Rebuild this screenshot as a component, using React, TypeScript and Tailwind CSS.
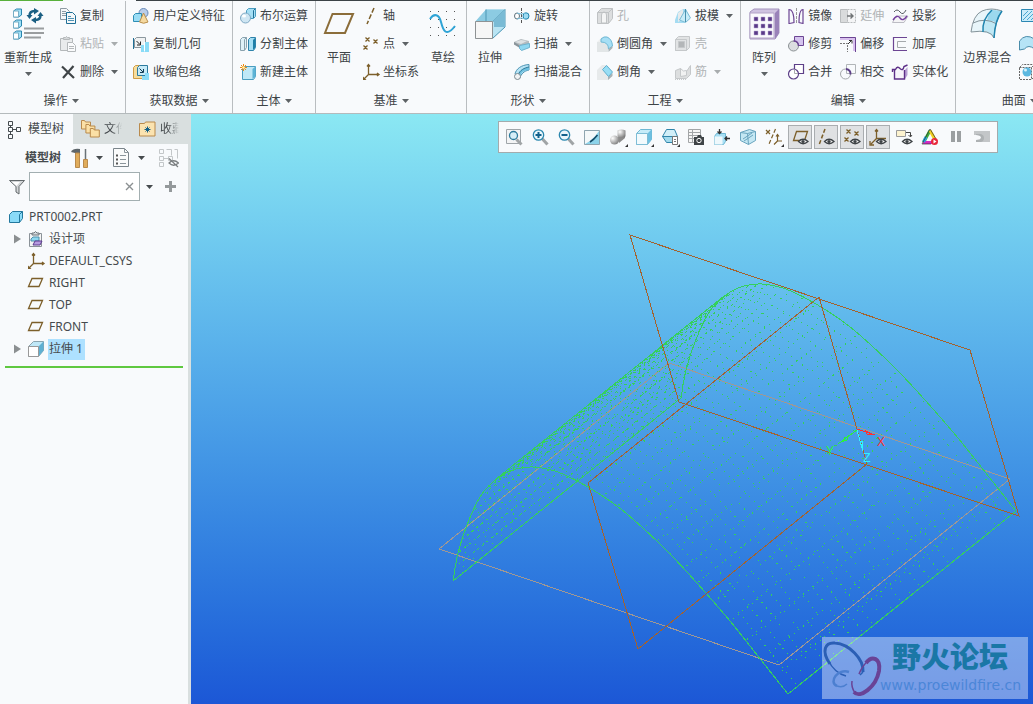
import { useState, type ReactNode } from "react";
import clsx from "clsx";

const icons: Record<string, ReactNode> = {
  copy: (
    <g stroke="#8d9aa3" fill="#f6f8f9">
      <path d="M.5.5h6l3 3v8h-9z" />
      <path d="M2 3.5h4M2 5.5h5M2 7.5h5" />
      <path d="M6.500 4.500h6l3 3v8h-9z" stroke="#1f6f96" />
      <path d="M8 8.500h3M8 10.500h6M8 12.500h6" stroke="#4f93b5" />
    </g>
  ),
  paste: (
    <g stroke="#b4b8ba" fill="#e9ebec">
      <path d="M.5 2.500h12v12H.500z" />
      <path d="M3.500 3.500v-2h2q1-2 2 0h2v2z" fill="#d4d7d9" />
      <path d="M7.500 6.500h5l3 3v6h-8z" fill="#fafbfc" />
      <path d="M9 10.500h5M9 12.500h5" />
    </g>
  ),
  remove: <path d="M2 2.500l12 11.500M13.500 2L3 14" stroke="#3f4447" strokeWidth="2.200" fill="none" />,
  udf: (
    <>
      <circle cx="10.500" cy="5" r="4.500" fill="#b9cde9" stroke="#6689b8" />
      <path d="M.500 7.500l2-2h6v6l-2 2h-6z" fill="#9adcf5" stroke="#2d8eb5" />
      <path d="M10.500 5L6.500 14q4 2.500 8.500 0z" fill="#f5d9a0" stroke="#b98f4c" />
    </>
  ),
  copyGeom: (
    <>
      <path d="M1.500 3.500l2-2h9v8l-2 2h-9z" fill="#f0f2f3" stroke="#8b979e" />
      <path d="M3.500 5l3.500 3.500M7.500 5.500v3.500H4" stroke="#222" fill="none" />
      <path d="M.500 2v11" stroke="#1f6f96" />
      <path d="M8 9h3V6h5v10H8z" fill="#8adcf7" />
      <path d="M11.500 6v9.500" stroke="#fff" />
    </>
  ),
  shrink: (
    <>
      <path d="M.500 3.500l2-2h9v11l-2 2h-9z" fill="#f7dd9d" stroke="#cf9c45" />
      <path d="M4.500 3.500l2-2h8v8l-2 2h-8z" fill="#c7ebf8" stroke="#2d7b9e" />
      <path d="M6.500 4.500L10 8M10.500 5v3.500H7" stroke="#113a52" fill="none" />
      <path d="M9 12h3V9h4v7H9z" fill="#8adcf7" />
    </>
  ),
  boolean: (
    <>
      <path d="M6.500 2.500l2-2h7v8l-2 2h-7z" fill="#a5dff5" stroke="#4a9dc0" />
      <path d="M13.500 10V2.500l2-2" stroke="#1f6f96" fill="none" />
      <circle cx="5.500" cy="10" r="5" fill="#cfe6f3" stroke="#7fa9c4" />
      <ellipse cx="4" cy="8" rx="2" ry="1.500" fill="#fff" />
    </>
  ),
  split: (
    <>
      <path d="M.500 3.500l2-2h4v10l-2 3h-4z" fill="#dff1f8" stroke="#8aa2ae" />
      <path d="M4.500 14V3.500l2-2" stroke="#8aa2ae" fill="none" />
      <path d="M8.500 3.500l2-2h5v10l-2 3h-5z" fill="#a5dff5" stroke="#2f83aa" />
      <path d="M13 14V4l2-2v10z" fill="#1f7fa8" />
    </>
  ),
  newBody: (
    <>
      <path d="M2.500 4.500l2-2h11v10l-2 3h-11z" fill="#bfe8f7" stroke="#4a9dc0" />
      <path d="M12.500 15V5l3-2.500v10z" fill="#5cb3d6" />
      <path d="M3.500 0v7M0 3.500h7M1 1l5 5M6 1L1 6" stroke="#f08a10" />
      <circle cx="3.500" cy="3.500" r="1.300" fill="#fff5b0" />
    </>
  ),
  axis: <path d="M11 0L4 16" stroke="#7c5f2a" strokeWidth="1.500" strokeDasharray="5 2" />,
  point: (
    <path
      d="M2.500 1.500l4 4M6.500 1.500l-4 4M10.500 3.500l4 4M14.500 3.500l-4 4M.500 9.500l4 4M4.500 9.500l-4 4"
      stroke="#7c5f2a"
      strokeWidth="1.300"
    />
  ),
  csys: (
    <g stroke="#7c5f2a" fill="none" strokeWidth="1.300">
      <path d="M5.500 1v9.500H16M5.500 10.500L1 15M4 2.500L5.500.500 7 2.500M14 9l2 1.500-2 1.500" />
      <path d="M0 12.500V16h3.500z" fill="#7c5f2a" stroke="none" />
    </g>
  ),
  plane: <path d="M4 3.500h10.500l-3.500 8H.500z" fill="none" stroke="#7c5f2a" strokeWidth="1.300" />,
  revolve: (
    <>
      <path d="M7.500 0v16" stroke="#555" strokeDasharray="3 1 1 1" />
      <ellipse cx="3" cy="8" rx="2.500" ry="3" fill="#fff" stroke="#5f727c" />
      <ellipse cx="12" cy="8" rx="3" ry="3.200" fill="#9edcf3" stroke="#1f84ae" />
      <path d="M3 5q4 2 8.500 0M3 11q4-2 8.500 0" stroke="#78bfdc" fill="none" />
    </>
  ),
  sweep: (
    <>
      <path d="M0 6l7-3 8 2v5l-9 1-6-3z" fill="#b4bbbf" />
      <path d="M1 6l6-2 6 1-6 3z" fill="#dde1e3" />
      <path d="M5.500 9.500l10-2v4l-8 3-2-2z" fill="#8ed7f1" stroke="#6fb2cd" />
      <path d="M0 6v2.500l5 3V9z" fill="#8a949a" />
    </>
  ),
  sweepBlend: (
    <>
      <path d="M1 10C2 5 7 1 15 .500V6c-5 1-8 4-9 8z" fill="#b7e4f5" stroke="#4d93b3" />
      <path d="M6 12c1-4 5-6 9-6V3c-6 1-9 4-11 7z" fill="#6cc0e0" />
      <path d="M4 11C6 6 10 4 15 3" stroke="#2f7797" fill="none" />
      <circle cx="3.500" cy="12.500" r="3" fill="#f1f3f4" stroke="#7d8a91" />
    </>
  ),
  hole: (
    <g stroke="#bfc2c4" fill="#dcdedf">
      <path d="M.500 4.500l4-4h11v10l-4 5h-11z" />
      <path d="M4.500 15V7q0-3 2.500-3t2.500 3v8z" fill="#f4f5f5" />
      <path d="M11.500 15V4.500l4-4M.500 4.500h11" fill="none" />
    </g>
  ),
  round: (
    <>
      <path d="M0 6l5-5h4l-4 5 6 5v5H0z" fill="#eef0f0" />
      <path d="M0 6h6q5 1 5 6v4H0z" fill="#e2e6e7" />
      <path d="M4 3q3-3 6-2 5 2 5.500 9l-4 3q0-7-7.500-7z" fill="#a6dff5" stroke="#6fb8d4" />
      <path d="M11.500 13l4-3v2l-4 4z" fill="#a8b2b6" />
    </>
  ),
  chamfer: (
    <>
      <path d="M0 6l5-5h5l5 6v5l-4 4H0z" fill="#e7eaeb" />
      <path d="M11 13l4.500-4v3L11 16z" fill="#a8b2b6" />
      <path d="M5.500 5.500l4-4 6 6.500-4 4.500z" fill="#98def5" stroke="#5fb0cf" />
    </>
  ),
  draft: (
    <>
      <path d="M0 12l3-8 5-3h3l4 9-6 5H0z" fill="#a5dcf2" />
      <path d="M3 5l5-4v10l-5 3z" fill="#e6eaec" />
      <path d="M4.500 12l6-10.500 5 8.500-5 4.500z" fill="#c8ecf8" stroke="#7bbcd6" />
      <path d="M10.500 1v13" stroke="#4a91ae" />
    </>
  ),
  shell: (
    <g stroke="#c5c8ca" fill="#e1e3e4">
      <path d="M.500 3.500l3-3h11v11l-3 3h-11z" />
      <path d="M.500 3.500h11v11h-11z" />
      <path d="M3.500 5.500h6v6h-6z" fill="#b3b6b8" />
    </g>
  ),
  rib: (
    <g stroke="#c5c8ca" fill="#dcdedf">
      <path d="M.500 14.500v-8l5-2v7l6-4 4-6v9l-4 4z" />
      <path d="M5.500 4.500q3 4 6 2v5l-6 1z" fill="#f1f2f2" />
      <path d="M0 15.500h12" strokeDasharray="1 1" />
    </g>
  ),
  mirror: (
    <>
      <path d="M1 1.500q5 0 5 13L1.500 15.500M1 1v15" fill="none" stroke="#6c4593" strokeWidth="1.200" />
      <path d="M8.500 0v16" stroke="#999" strokeDasharray="3 1" />
      <path d="M15 1.500q-4 0-4 13l4 1M15 1v15" fill="none" stroke="#6c4593" strokeWidth="1.200" />
    </>
  ),
  extend: (
    <g stroke="#b9bcbe" fill="#d9dbdc">
      <path d="M.500 1.500h7v13h-7z" />
      <path d="M7.500 1.500h8v13h-8z" fill="#f4f5f6" strokeDasharray="2 1" />
      <path d="M7 8h6M10.500 5.500L13 8l-2.500 2.500" stroke="#6f7375" fill="none" strokeWidth="1.400" />
    </g>
  ),
  project: (
    <>
      <path d="M2 4q3-4 6 0t6-2" fill="none" stroke="#555b60" />
      <path d="M.500 14.500L4 8h12l-4 6.500z" fill="#f4f4f6" stroke="#bcbcc4" />
      <path d="M1 12q4-6 7-2t7-2" fill="none" stroke="#753f9f" strokeWidth="1.400" />
    </>
  ),
  trim: (
    <>
      <path d="M6.500.500h9v9h-9z" fill="#d5c4ee" stroke="#6c4593" />
      <circle cx="5.500" cy="10" r="5" fill="#dcdee0" stroke="#8b9194" />
      <path d="M5.500 5q5 0 5 5" stroke="#6c4593" fill="none" strokeWidth="1.400" />
    </>
  ),
  offset: (
    <>
      <path d="M0 1h16v14h-3V4H0z" fill="#d8c0ee" />
      <path d="M0 1.500h15.500V16" stroke="#6c4593" fill="none" />
      <path d="M0 7.500h7.500V16" stroke="#777" strokeDasharray="2 1" fill="none" />
      <path d="M8 8l3.500-3.500M9 4.500h3v3" stroke="#333" fill="none" />
    </>
  ),
  thicken: (
    <>
      <path d="M15 1.500H1.500v13H15" fill="none" stroke="#6c4593" strokeWidth="1.200" />
      <path d="M14 5.500H5.500v6H14" fill="none" stroke="#a5a9ac" />
    </>
  ),
  merge: (
    <>
      <path d="M6.500.500h9v9h-9z" fill="#fff" stroke="#5d3f88" strokeWidth="1.200" />
      <circle cx="5.500" cy="10" r="5" fill="#fff" stroke="#5d3f88" strokeWidth="1.200" />
      <path d="M6.500 5.500v4H10" stroke="#a9aaac" fill="none" />
    </>
  ),
  intersect: (
    <>
      <path d="M6.500.500h9v9h-9z" fill="none" stroke="#b1b5b8" />
      <circle cx="5.500" cy="10" r="5" fill="none" stroke="#a4a8ab" />
      <path d="M6 5q5 1 4.500 5.500" stroke="#5d3f88" fill="none" strokeWidth="1.800" />
    </>
  ),
  solidify: (
    <>
      <path d="M3 7l4-1 5-2v7l-.500 4H3z" fill="#f6f3fa" />
      <path d="M13 15l2.500-4V3L13 6z" fill="#b79fd3" />
      <path d="M.500 8V5.500h3q2-4 4.500-1 3 3 4-2l3.500-1.500M2.500 6v9h10V6" fill="none" stroke="#5d2f88" strokeWidth="1.400" />
    </>
  ),
  fill: (
    <>
      <path d="M2.500 1.500h13v12h-13z" fill="#c9ecfa" stroke="#2b87b3" />
      <path d="M4 8l5-5M4 12l9-9M8 12l6-6M12 12l3-3" stroke="#4aa7d0" />
    </>
  ),
  style: <path d="M.500 5q6-8 15-2v10q-6-5-10 0l-5 1z" fill="#b6e4f6" stroke="#4a8caa" />,
  freestyle: (
    <>
      <path d="M.500 3.500l3-3h12v12l-3 3h-12zM.500 3.500h12v12M12.500 3.500l3-3" fill="none" stroke="#666" strokeDasharray="2 1" />
      <circle cx="8" cy="8" r="4.500" fill="#5bb8e0" />
      <circle cx="6.500" cy="6" r="1.500" fill="#d9f2fb" />
    </>
  ),
  modelTree: (
    <g fill="none" stroke="#454b4f">
      <path d="M.500.500h4v4h-4zM.500 6.500h4v4h-4zM.500 13.500h4v4h-4zM8.500 6.500h4v4h-4zM2.500 4.500v2M2.500 10.500v3M4.500 8.500h4" />
    </g>
  ),
  part: (
    <>
      <path d="M1.500 5.500l3-3h10v7l-3 4h-10z" fill="#8adbf8" stroke="#23789e" />
      <path d="M11.500 13.500v-8l3-3" fill="none" stroke="#23789e" />
    </>
  ),
  design: (
    <>
      <path d="M1.500 2.500h12v13h-12z" fill="#f3f4f5" stroke="#8b9298" />
      <path d="M4 4V2h2q1.500-3 3 0h2v2z" fill="#d6dadd" stroke="#6c757b" />
      <path d="M3 8l2-2h6v4H3z" fill="#8ed8f1" stroke="#4d8faa" />
      <path d="M7 10h7l-2 4H5z" fill="#b79be0" stroke="#5c3b8e" />
    </>
  ),
  extrude: (
    <>
      <path d="M.500 5.500l5-5h10v9l-5 6h-10z" fill="#bfe8f7" stroke="#8aa5b0" />
      <path d="M10.500 5.500l5-5v9l-5 6z" fill="#5fb0d2" />
      <path d="M.500 5.500h10v10H.500z" fill="#fff" stroke="#999" />
    </>
  ),
  zoomFit: (
    <>
      <path d="M.500.500h14v14H.500z" fill="#f3f4f5" stroke="#9fa5a9" />
      <path d="M10.500 10.500l5 5" stroke="#a0a4a6" strokeWidth="3" />
      <circle cx="7.500" cy="6.500" r="4" fill="#d5eef8" stroke="#2b7a9c" strokeWidth="1.300" />
    </>
  ),
  zoomIn: (
    <>
      <path d="M10 9.500l5.500 6" stroke="#a0a4a6" strokeWidth="3" />
      <circle cx="6.500" cy="6" r="5.200" fill="#eaf6fb" stroke="#2b87ae" strokeWidth="1.300" />
      <path d="M3.500 6h6M6.500 3v6" stroke="#12618c" strokeWidth="2" />
    </>
  ),
  zoomOut: (
    <>
      <path d="M10 9.500l5.500 6" stroke="#a0a4a6" strokeWidth="3" />
      <circle cx="6.500" cy="6" r="5.200" fill="#eaf6fb" stroke="#2b87ae" strokeWidth="1.300" />
      <path d="M3.500 6h6" stroke="#12618c" strokeWidth="2" />
    </>
  ),
  repaint: (
    <>
      <path d="M.500 1.500h15v14H.500z" fill="#8cd3ea" stroke="#8fa5af" />
      <path d="M1 2h14Q12 7 6 12l-5 3z" fill="#f4f8f9" />
      <path d="M13.500 6Q10 10.500 6 13" stroke="#134a66" strokeWidth="1.500" fill="none" />
    </>
  ),
  shading: (
    <>
      <defs>
        <radialGradient id="ball" cx=".3" cy=".3" r=".8">
          <stop offset="0" stopColor="#fff" />
          <stop offset="1" stopColor="#7b7b7b" />
        </radialGradient>
      </defs>
      <path d="M7 9l4-3 4-3v6l-6 5z" fill="#8b8b8b" />
      <path d="M7.500 1.500q4-2 8 0v6q-4 2-8 0z" fill="url(#ball)" />
      <circle cx="4.500" cy="11" r="4.500" fill="url(#ball)" />
    </>
  ),
  style3d: (
    <>
      <path d="M.500 4.500l4-4h11v10l-4 5h-11z" fill="#c6ecf9" stroke="#6fb8d4" />
      <path d="M11.500 4.500l4-4v10l-4 5z" fill="#6dbfe0" />
      <path d="M.500 4.500h11v11H.500z" fill="#f2fafd" stroke="#7ebdd6" />
    </>
  ),
  views: (
    <>
      <path d="M4.500.500h8l3 7h-15z" fill="#d2eff8" stroke="#3185aa" />
      <path d="M.500 7.500h15l-3 6h-8z" fill="#a4dbed" stroke="#3185aa" />
      <path d="M10.500 7.500h5v8h-5z" fill="#fff" stroke="#777" />
      <path d="M12 10.500h2M12 12.500h2" stroke="#777" />
    </>
  ),
  viewManager: (
    <>
      <path d="M.500.500h12v13H.500zM.500 3.500h12M.500 6.500h12M.500 9.500h12M4.500.500v13" fill="#f7f7f7" stroke="#a2a5a7" />
      <path d="M6 8h3l1-2h3l1 2h2v8H6z" fill="#3f4447" />
      <circle cx="11" cy="11.500" r="2.200" fill="#3f4447" stroke="#fff" />
    </>
  ),
  orient: (
    <>
      <path d="M.500 7.500l2-3h9v8l-2 3h-9z" fill="#a7dff4" stroke="#6fb8d4" />
      <path d="M.500 7.500h8v8h-8z" fill="#eef8fc" />
      <path d="M5.500 0v4M3.500 2.500l2 2 2-2M16 9.500h-5M13 7.500l-2 2 2 2" stroke="#333" fill="none" strokeWidth="1.300" />
    </>
  ),
  perspective: (
    <>
      <path d="M.500 3.500l9-3 6 2v9l-7 4-8-4z" fill="#c4e7f3" stroke="#6aa5bf" />
      <path d="M.500 3.500l7 1 8-2M7.500 4.500l1 11M3 10l9-6M4 12l9-6" stroke="#6aa5bf" fill="none" />
    </>
  ),
  datumFilter: (
    <g stroke="#7c5f2a" fill="none" strokeWidth="1.200">
      <path d="M0 1l4 4M4 1L0 5" />
      <path d="M9.500 0L3 15" strokeDasharray="4 2" />
      <path d="M11.500 6v6H16M11.500 12L8 15.500M10 7.500l1.500-2 1.500 2" />
    </g>
  ),
  annotation: (
    <>
      <path d="M.500 1.500h9v6h-9z" fill="#fdf3cf" stroke="#9a9a9a" />
      <path d="M10 3.500h4.500v4M12.500 6l2 2 1.500-2" stroke="#444" fill="none" />
      <Eye />
    </>
  ),
  simulate: (
    <>
      <path d="M8 1.500L1.500 13.500" stroke="#3cae3a" strokeWidth="3" />
      <path d="M8 1.500l5 9" stroke="#f2d21d" strokeWidth="3" />
      <path d="M1 13.500h9" stroke="#d52cc4" strokeWidth="3" />
      <path d="M4 8l-2.500 5" stroke="#22a7e0" strokeWidth="3" />
      <path d="M8 0l-8 15h9M8 0l6 10" fill="none" stroke="#333" strokeWidth=".700" />
      <circle cx="12.500" cy="12.500" r="3.500" fill="#e8283a" />
      <path d="M11.500 10.500l3 2-3 2z" fill="#fff" />
    </>
  ),
  pause: <path d="M3 2h4v11H3zM9 2h4v11H9z" fill="#9b9fa1" />,
  stop: (
    <>
      <path d="M0 2h16v11H2v-2q5 0 5-2.500T2 6H0z" fill="#c3c6c8" />
      <path d="M2 11q5 0 5-2.500T2 6v-1h5q3 1 3 4t-3 4H2z" fill="#adb1b3" />
    </>
  ),
  planeOn: (
    <>
      <path d="M4.500 2.500h11l-3 9h-11z" fill="none" stroke="#7c5f2a" strokeWidth="1.300" />
      <Eye />
    </>
  ),
  axisOn: (
    <>
      <path d="M7 0L1 16" stroke="#7c5f2a" strokeWidth="1.500" strokeDasharray="4 2" />
      <Eye />
    </>
  ),
  pointOn: (
    <>
      <path
        d="M2.500.500l4 4M6.500.500l-4 4M10.500 2.500l4 4M14.500 2.500l-4 4M.500 8.500l4 4M4.500 8.500l-4 4"
        stroke="#7c5f2a"
        strokeWidth="1.300"
      />
      <Eye />
    </>
  ),
  csysOn: (
    <>
      <path d="M6.500 1v8.500H16M6.500 9.500L1 15M5 2.500L6.500.500 8 2.500M0 12v4h4" stroke="#7c5f2a" fill="none" strokeWidth="1.300" />
      <Eye />
    </>
  ),
};

function Eye() {
  return (
    <>
      <path d="M6.500 12.500q4.500-4.500 9.500 0q-5 4.500-9.500 0z" fill="#eee" stroke="#3d4245" strokeWidth="1.300" />
      <circle cx="11" cy="12.500" r="1.600" fill="#3d4245" />
    </>
  );
}

function Icon({ name }: { name: string }) {
  return (
    <svg viewBox="0 0 16 16" className="size-4 shrink-0 overflow-visible" aria-hidden="true">
      {icons[name]}
    </svg>
  );
}

function Caret({ className }: { className?: string }) {
  return (
    <svg viewBox="0 0 7 4" className={clsx("h-1 w-[7px] shrink-0 fill-current", className)} aria-hidden="true">
      <path d="M0 0h7L3.500 4z" />
    </svg>
  );
}

const cubes = [0, 11, 22];
const nine = [0, 1, 2, 3, 4, 5, 6, 7, 8];

const bigIcons: Record<string, ReactNode> = {
  regenerate: (
    <>
      {cubes.map((y) => (
        <g key={y}>
          <path d={`M1.500 ${y + 3}l3-2h5v6l-3 2h-5z`} fill="#9fdff6" stroke="#2a86ae" />
          <path d={`M1.500 ${y + 3}h5v6h-5z`} fill="#fff" stroke="#77aec6" />
        </g>
      ))}
      <path d="M17.500 8q0-5 5-5M28.500 7q0 5-5 5" fill="none" stroke="#1b5f83" strokeWidth="2.500" />
      <path d="M22 0l5 3-5 3.500zM24 15.500l-5-3.500 5-3zM14.500 7h6l-3 4zM25.500 8h6l-3-4z" fill="#1b5f83" />
      <path d="M12 20.500h20M12 25h20M12 29.500h17" stroke="#9a9d9f" strokeWidth="2" />
    </>
  ),
  plane: <path d="M9.500 6h20.500l-8 19H2z" fill="none" stroke="#8b6d3a" strokeWidth="2" />,
  sketch: (
    <>
      {[3, 11, 19, 27].flatMap((y) => [3, 11, 19, 27].map((x) => <path key={`${x}-${y}`} d={`M${x} ${y + 0.5}h1`} stroke="#555" />))}
      <path d="M3 11c4-6 9-5 11 3s5 16 14 4" fill="none" stroke="#2fa4d6" strokeWidth="2" />
    </>
  ),
  extrude: (
    <>
      <path d="M1 14L12 1.500h19v18L18 31H1z" fill="#b9e4f3" />
      <path d="M12 1.500h19L18.500 14H1z" fill="#8ccbe2" />
      <path d="M12 1.500v12M31 1.500L18.500 14M31 19L18.500 30.500M31 1.500V19" fill="none" stroke="#4d97b5" />
      <path d="M20 13L31 2v17H20z" fill="#7abbd5" />
      <path d="M1.500 13.500h17V30.500h-17z" fill="#f6f6f6" stroke="#8e9294" />
    </>
  ),
  pattern: (
    <>
      <path d="M2 4l4-3h25v24l-4 6H2z" fill="#cfc2e0" stroke="#a594be" />
      <path d="M27 5l4-4v24l-4 6z" fill="#9a82b9" />
      <path d="M2 5h24v25H2z" fill="#faf9fc" stroke="#b3a4c6" />
      {nine.map((i) => (
        <path key={i} d={`M${6 + (i % 3) * 7} ${9 + Math.floor(i / 3) * 7}h4v4h-4z`} fill="#5b3a88" stroke="#b9a8d4" strokeWidth=".500" />
      ))}
    </>
  ),
  boundary: (
    <>
      <path d="M0 24Q2 7 11 3q9-4 20 0-7 9-8 27-3-9-23-6z" fill="#e8f5fa" />
      <path d="M20 2q6 0 11 1-4 5-5 12-5-3-10-2 1-7 4-11z" fill="#9bd8ee" />
      <path d="M12 24q0-6 3-11 6-1 10 2-2 8-2 15-3-5-11-6z" fill="#c0e8f5" />
      <path d="M0 24Q2 7 11 3q9-4 20 0-7 9-8 27-3-9-23-6zM2 15q12-6 24 1" fill="none" stroke="#84939a" />
      <path d="M21 2Q11 11 12 24M31 3q-7 9-8 27" fill="none" stroke="#1f85b0" strokeWidth="1.500" />
    </>
  ),
};

type Command = { label: string; icon: string; caret?: boolean; disabled?: boolean };

function SmallButton({ label, icon, caret, disabled }: Command) {
  return (
    <button type="button" disabled={disabled} className="flex h-7 items-center gap-1 disabled:text-[#b0b4b6]">
      <Icon name={icon} />
      {label}
      {caret ? <Caret className={clsx("ml-[3px]", disabled ? "text-[#a8acae]" : "text-[#5d6265]")} /> : null}
    </button>
  );
}

function LargeButton({ label, icon, caret }: Command) {
  return (
    <button type="button" className="flex min-w-8 flex-col items-center pt-1.5">
      <svg viewBox="0 0 32 32" className="size-8 overflow-visible" aria-hidden="true">
        {bigIcons[icon]}
      </svg>
      <span className="mt-2.5">{label}</span>
      {caret ? <Caret className="mt-1.5 text-[#5d6265]" /> : null}
    </button>
  );
}

function Column({ items }: { items: Command[] }) {
  return (
    <div className="flex flex-col items-start">
      {items.map((item) => (
        <SmallButton key={item.label} {...item} />
      ))}
    </div>
  );
}

function Group({ title, className, children }: { title: string; className?: string; children: ReactNode }) {
  return (
    <section className={clsx("flex shrink-0 flex-col pt-px", className)}>
      <div className="flex h-21 items-start gap-2">{children}</div>
      <button type="button" className="flex h-[27px] items-center justify-center gap-1 pt-0.5">
        {title}
        <Caret className="text-[#5d6265]" />
      </button>
    </section>
  );
}

const groupClass = "border-r border-[#b9bdc0] px-[7px]";

function Ribbon() {
  return (
    <header className="border-b border-[#b4babc] bg-[#f8fafc]">
      <div className="flex h-px">
        <div className="w-[63px] bg-[#58b03c]" />
        <div className="w-[73px]" />
        <div className="flex-1 bg-[#3b4347]" />
      </div>
      <div className="flex overflow-hidden">
        <Group title="操作" className="border-r border-[#b9bdc0] pr-[7px] pl-1">
          <LargeButton label="重新生成" icon="regenerate" caret />
          <Column
            items={[
              { label: "复制", icon: "copy" },
              { label: "粘贴", icon: "paste", caret: true, disabled: true },
              { label: "删除", icon: "remove", caret: true },
            ]}
          />
        </Group>
        <Group title="获取数据" className={groupClass}>
          <Column
            items={[
              { label: "用户定义特征", icon: "udf" },
              { label: "复制几何", icon: "copyGeom" },
              { label: "收缩包络", icon: "shrink" },
            ]}
          />
        </Group>
        <Group title="主体" className={groupClass}>
          <Column
            items={[
              { label: "布尔运算", icon: "boolean" },
              { label: "分割主体", icon: "split" },
              { label: "新建主体", icon: "newBody" },
            ]}
          />
        </Group>
        <Group title="基准" className={groupClass}>
          <LargeButton label="平面" icon="plane" />
          <Column
            items={[
              { label: "轴", icon: "axis" },
              { label: "点", icon: "point", caret: true },
              { label: "坐标系", icon: "csys" },
            ]}
          />
          <LargeButton label="草绘" icon="sketch" />
        </Group>
        <Group title="形状" className={groupClass}>
          <LargeButton label="拉伸" icon="extrude" />
          <Column
            items={[
              { label: "旋转", icon: "revolve" },
              { label: "扫描", icon: "sweep", caret: true },
              { label: "扫描混合", icon: "sweepBlend" },
            ]}
          />
        </Group>
        <Group title="工程" className={groupClass}>
          <Column
            items={[
              { label: "孔", icon: "hole", disabled: true },
              { label: "倒圆角", icon: "round", caret: true },
              { label: "倒角", icon: "chamfer", caret: true },
            ]}
          />
          <Column
            items={[
              { label: "拔模", icon: "draft", caret: true },
              { label: "壳", icon: "shell", disabled: true },
              { label: "筋", icon: "rib", caret: true, disabled: true },
            ]}
          />
        </Group>
        <Group title="编辑" className={groupClass}>
          <LargeButton label="阵列" icon="pattern" caret />
          <Column
            items={[
              { label: "镜像", icon: "mirror" },
              { label: "修剪", icon: "trim" },
              { label: "合并", icon: "merge" },
            ]}
          />
          <Column
            items={[
              { label: "延伸", icon: "extend", disabled: true },
              { label: "偏移", icon: "offset" },
              { label: "相交", icon: "intersect" },
            ]}
          />
          <Column
            items={[
              { label: "投影", icon: "project" },
              { label: "加厚", icon: "thicken" },
              { label: "实体化", icon: "solidify" },
            ]}
          />
        </Group>
        <Group title="曲面" className="w-[119px] pl-[7px]">
          <LargeButton label="边界混合" icon="boundary" />
          <div className="flex flex-col">
            {["fill", "style", "freestyle"].map((name) => (
              <button key={name} type="button" aria-label={name} className="flex h-7 items-center">
                <Icon name={name} />
              </button>
            ))}
          </div>
        </Group>
      </div>
    </header>
  );
}

const treeItems = [
  { label: "设计项", icon: "design", expandable: true },
  { label: "DEFAULT_CSYS", icon: "csys" },
  { label: "RIGHT", icon: "plane" },
  { label: "TOP", icon: "plane" },
  { label: "FRONT", icon: "plane" },
  { label: "拉伸 1", icon: "extrude", expandable: true, selected: true },
];

function Sidebar() {
  const [query, setQuery] = useState("");

  return (
    <aside className="w-[191px] shrink-0 border-r-3 border-[#d9dfdf] bg-[#f8fafc] text-[#454a4d]">
      <div role="tablist" className="flex h-[30px] bg-[#d9dfdf]">
        <button type="button" role="tab" aria-selected="true" className="flex w-[73px] items-center gap-1 bg-[#f8fafc] pl-2">
          <Icon name="modelTree" />
          模型树
        </button>
        <button type="button" role="tab" aria-selected="false" className="flex w-[58px] items-center gap-1 pl-2">
          <svg viewBox="0 0 19 18" className="h-[18px] w-[19px] shrink-0" aria-hidden="true">
            {[0, 4, 8].map((d) => (
              <path key={d} d={`M${d * 1.1 + 0.5} ${d + 0.5}h3l1 1.500h5v7h-9z`} fill="#fbe0a6" stroke="#b98a4c" />
            ))}
          </svg>
          <span className="w-[18px] overflow-hidden whitespace-nowrap mask-r-from-40%">文件</span>
        </button>
        <button type="button" role="tab" aria-selected="false" className="flex items-center gap-1 pl-2">
          <svg viewBox="0 0 17 16" className="h-4 w-[17px] shrink-0" aria-hidden="true">
            <path d="M.500 2.500h5l1-1.500h9.500v14H.500z" fill="#fbe3b0" stroke="#b98a4c" />
            <path d="M8.500 5.500v6M5.500 8.500h6M6.500 6.500l4 4M10.500 6.500l-4 4" stroke="#125f86" />
          </svg>
          <span className="w-[19px] overflow-hidden whitespace-nowrap mask-r-from-40%">收藏</span>
        </button>
      </div>

      <div className="flex h-7 items-center pl-[25px]">
        <h2 className="text-xs font-bold">模型树</h2>
        <button type="button" aria-label="设置" className="ml-2.5 flex items-center gap-2">
          <svg viewBox="0 0 17 20" className="h-5 w-[17px]" aria-hidden="true">
            <path d="M0 4Q2 0 9 1v4H4z" fill="#5e666b" />
            <path d="M4.500 5h4v14.500h-4z" fill="#e0ac5b" stroke="#b98a4c" />
            <path d="M14.500 1v10" stroke="#6a7277" strokeWidth="1.500" />
            <path d="M12.500 11.500h4v8h-4z" fill="#e0ac5b" stroke="#b98a4c" />
          </svg>
          <Caret />
        </button>
        <button type="button" aria-label="显示" className="ml-2.5 flex items-center gap-2">
          <svg viewBox="0 0 17 20" className="h-5 w-[17px]" aria-hidden="true">
            <path d="M.500.500h11l4 4v14H.500z" fill="#fafbfb" stroke="#7b858b" />
            <path d="M11.500.500v4h4M7 7.500h6M7 11.500h6M7 15.500h6" fill="none" stroke="#8b959b" />
            <path d="M3 7.500h2M3 11.500h2M3 15.500h2" stroke="#555" strokeWidth="2" />
          </svg>
          <Caret />
        </button>
        <button type="button" aria-label="隐藏" disabled className="ml-3.5">
          <svg viewBox="0 0 20 20" className="size-5" aria-hidden="true">
            <path
              d="M.500 1.500h4v4h-4zM.500 8.500h4v4h-4zM.500 14.500h4v4h-4zM9.500 8.500h4v4h-4zM5 10.500h4M7.500 1.500h5v6M15.500 1.500h3v9"
              fill="none"
              stroke="#c3c7c9"
            />
            <path d="M10 15q4.500-4.500 9.500 0-5 4.500-9.500 0zM10 10.500l9 8.500" fill="none" stroke="#7b7f81" strokeWidth="1.200" />
          </svg>
        </button>
      </div>

      <div className="flex h-[29px] items-center pl-[9px]">
        <svg viewBox="0 0 16 16" className="size-4 shrink-0" aria-hidden="true">
          <path d="M.500 1.500h15l-5.500 6V15l-3-2V7.500z" fill="#d2d5d7" stroke="#62686b" />
          <path d="M3 3h8L7.500 7z" fill="#fff" />
        </svg>
        <label className="ml-1 flex h-[29px] w-[111px] items-center border border-[#a3afb1] bg-white">
          <input
            type="text"
            aria-label="搜索"
            value={query}
            onChange={(e) => setQuery(e.target.value)}
            className="h-full min-w-0 flex-1 px-1 outline-none"
          />
          <button type="button" aria-label="清除" onClick={() => setQuery("")} className="px-[5px]">
            <svg viewBox="0 0 9 9" className="size-[9px]" aria-hidden="true">
              <path d="M1 1l7 7M8 1L1 8" stroke="#8b9092" strokeWidth="1.400" />
            </svg>
          </button>
        </label>
        <Caret className="ml-1.5" />
        <button type="button" aria-label="添加" className="ml-3">
          <svg viewBox="0 0 11 11" className="size-[11px]" aria-hidden="true">
            <path d="M0 5.500h11M5.500 0v11" stroke="#94999b" strokeWidth="3" />
          </svg>
        </button>
      </div>

      <div role="tree" aria-label="模型树" className="pt-[5px]">
        <div role="treeitem" aria-selected="false" className="flex h-[22px] items-center gap-[5px] pl-2">
          <Icon name="part" />
          PRT0002.PRT
        </div>
        {treeItems.map((item) => (
          <div
            key={item.label}
            role="treeitem"
            aria-selected={item.selected ?? false}
            className="flex h-[22px] items-center gap-1 pl-3"
          >
            <svg viewBox="0 0 12 12" className="size-3 shrink-0" aria-hidden="true">
              {item.expandable ? <path d="M2 1.500v9l7-4.500z" fill="#8b8f91" /> : null}
            </svg>
            <Icon name={item.icon} />
            <span className={clsx("flex h-[21px] items-center px-px pr-0.5", item.selected && "bg-[#aee1ff]")}>{item.label}</span>
          </div>
        ))}
      </div>
      <div className="mx-[5px] mt-[6px] h-0.5 bg-[#5fc840]" />
    </aside>
  );
}

const tools = [
  { name: "zoomFit" },
  { name: "zoomIn" },
  { name: "zoomOut" },
  { name: "repaint" },
  { name: "shading", menu: true },
  { name: "style3d", menu: true },
  { name: "views", menu: true },
  { name: "viewManager" },
  { name: "orient" },
  { name: "perspective" },
  { name: "datumFilter", menu: true },
  { name: "planeOn", on: true },
  { name: "axisOn", on: true },
  { name: "pointOn", on: true },
  { name: "csysOn", on: true },
  { name: "annotation" },
  { name: "simulate" },
  { name: "pause" },
  { name: "stop" },
];

function ViewToolbar() {
  return (
    <div role="toolbar" className="absolute top-[7px] right-[35px] flex h-8 items-center gap-0.5 border border-[#a3abad] bg-[#f8fafc] px-[3px]">
      {tools.map((tool) => (
        <button
          key={tool.name}
          type="button"
          aria-label={tool.name}
          aria-pressed={tool.on ?? false}
          className={clsx("relative flex size-6 items-center justify-center", tool.on && "border border-[#a9adb0] bg-[#dfe1e3]")}
        >
          <Icon name={tool.name} />
          {tool.menu ? (
            <svg viewBox="0 0 3 3" className="absolute right-0.5 bottom-0.5 size-[3px]" aria-hidden="true">
              <path d="M3 0v3H0z" fill="#333" />
            </svg>
          ) : null}
        </button>
      ))}
    </div>
  );
}

// profile of the extruded surface; the far end is the same curve shifted by DEPTH
const profile = [
  [453, 581], [458, 553], [467, 525], [480, 497], [493, 482], [510, 471], [530, 467], [547, 469],
  [563, 474], [588, 487], [617, 506], [643, 528], [670, 554], [697, 583], [730, 621], [761, 660], [788, 694],
];
const DEPTH = [228, -183];

function smoothPath(points: number[][]) {
  let d = `M${points[0][0]} ${points[0][1]}`;
  for (let i = 0; i < points.length - 1; i++) {
    const p0 = points[Math.max(i - 1, 0)];
    const p1 = points[i];
    const p2 = points[i + 1];
    const p3 = points[Math.min(i + 2, points.length - 1)];
    d += `C${p1[0] + (p2[0] - p0[0]) / 6} ${p1[1] + (p2[1] - p0[1]) / 6} ${p2[0] - (p3[0] - p1[0]) / 6} ${p2[1] - (p3[1] - p1[1]) / 6} ${p2[0]} ${p2[1]}`;
  }
  return d;
}

const curve = smoothPath(profile);
const slices = Array.from({ length: 23 }, (_, i) => (i + 1) / 24);
const rulings = profile.slice(0, -1).flatMap(([x, y], i) => {
  const [nx, ny] = profile[i + 1];
  return [
    [x, y],
    [(x + nx) / 2, (y + ny) / 2],
  ];
});

function Scene() {
  return (
    <svg
      viewBox="191 114 842 590"
      preserveAspectRatio="xMidYMid slice"
      className="absolute inset-0 size-full"
      fill="none"
      shapeRendering="crispEdges"
      aria-hidden="true"
    >
      <g stroke="#33d15a">
        <g strokeDasharray="1 6">
          {slices.map((t) => (
            <path key={t} d={curve} transform={`translate(${DEPTH[0] * t} ${DEPTH[1] * t})`} />
          ))}
        </g>
        {rulings.map(([x, y], i) => (
          <path key={i} d={`M${x} ${y}l${DEPTH[0]} ${DEPTH[1]}`} strokeDasharray={i < 14 ? "2 4" : "1 5"} strokeDashoffset={i * 2} />
        ))}
      </g>
      <path d="M439 549L669 363 1010 479 779 665z" stroke="#a09893" />
      <g stroke="#35d05c">
        <path d={curve} />
        <path d={curve} transform={`translate(${DEPTH[0]} ${DEPTH[1]})`} />
        <path d="M453 581l228-183M788 694l228-183M496 479l228-183" />
      </g>
      <g stroke="#a3622e">
        <path d="M630 235L970 350 1019 516 679 402z" />
        <path d="M819 297L867 464 638 649 588 483z" />
      </g>
      <path d="M857 429l18 6M866 431l8 4-7-1z" stroke="#ff3030" />
      <path d="M857 430l-19 14M848 436l-7 6 6-2z" stroke="#2cf03c" />
      <path d="M857 430l6 21M860 442l3 8-1-9z" stroke="#30f5ff" />
      <g fontFamily="Liberation Sans, sans-serif" fontSize="12" textAnchor="middle">
        <text x="881" y="446" fill="#ff3030">X</text>
        <text x="830" y="455" fill="#2cf03c">Y</text>
        <text x="867" y="462" fill="#30f5ff">Z</text>
      </g>
    </svg>
  );
}

function Watermark() {
  return (
    <div className="absolute right-[5px] bottom-[5px] flex h-[62px] w-[206px] bg-white/40">
      <svg viewBox="0 0 58 62" className="h-[62px] w-[58px] shrink-0 overflow-visible" fill="none" aria-hidden="true">
        <path d="M8 27C-1 14 3 5 13 6c14 1 29 16 28 29" stroke="#2b5fb5" strokeWidth="3" />
        <path d="M6 23c4 8 10 14 18 16M41 35l-3 3" stroke="#2b5fb5" strokeWidth="1.500" />
        <path d="M27 35C16 31 6 45 15 49" stroke="#4c7fd0" strokeWidth="2.500" />
        <path d="M15 49q6 2 10-2" stroke="#4c7fd0" strokeWidth="1.500" />
        <path d="M44 26C50 18 59 21 57 34 54 50 38 62 32 55" stroke="#694396" strokeWidth="4" />
        <path d="M37 37q3-8 10-14M33 56q-4-6-3-12" stroke="#694396" strokeWidth="1.500" />
      </svg>
      <div className="flex flex-col whitespace-nowrap">
        <span className="pl-3 text-[29px] leading-[40px] font-black text-[#1a77a6]">野火论坛</span>
        <span className="font-['DejaVu_Sans'] text-sm leading-4 text-[#4b86d8]">www.proewildfire.cn</span>
      </div>
    </div>
  );
}

export default function App() {
  return (
    <div className="flex h-screen flex-col overflow-hidden font-['Noto_Sans','Noto_Sans_CJK_SC',sans-serif] text-xs leading-4 text-[#3d4346]">
      <Ribbon />
      <div className="flex min-h-0 flex-1">
        <Sidebar />
        <main className="relative flex-1 overflow-hidden bg-linear-to-b from-[#8be8f3] to-[#1c57d6]">
          <Scene />
          <Watermark />
          <ViewToolbar />
        </main>
      </div>
    </div>
  );
}
